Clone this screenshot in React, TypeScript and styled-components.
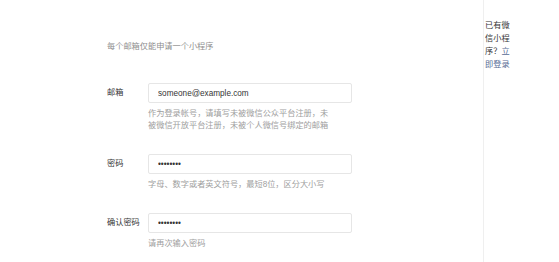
import React from "react";
import styled, { createGlobalStyle } from "styled-components";

const Global = createGlobalStyle`
  html, body { margin: 0; padding: 0; background: #ffffff; }
  body { font-family: "Liberation Sans", "Noto Sans CJK SC", sans-serif; }
`;

const Page = styled.div`
  display: flex;
  width: 559px;
  height: 262px;
  overflow: hidden;
  background: #fff;
`;

const Main = styled.div`
  flex: 1;
  padding: 41px 0 0 107px;
`;

const Notice = styled.div`
  font-size: 8.2px;
  line-height: 12px;
  color: #8f8f8f;
  margin-bottom: 30px;
`;

const Field = styled.div`
  display: grid;
  grid-template-columns: 41px 204px;
  margin-bottom: 22px;
`;

const Label = styled.label`
  font-size: 8.2px;
  line-height: 20px;
  color: #353535;
`;

const Input = styled.input`
  box-sizing: border-box;
  width: 204px;
  height: 20px;
  border: 1px solid #e6e6e6;
  border-radius: 2px;
  padding: 0 9px;
  font-family: "Liberation Sans", sans-serif;
  font-size: 8.2px;
  color: #353535;
  outline: none;
  background: #fff;
`;

const Hint = styled.div`
  grid-column: 2;
  width: 184px;
  margin-top: 5px;
  font-size: 8.2px;
  line-height: 12px;
  color: #9e9e9e;
`;

const Side = styled.aside`
  width: 76px;
  border-left: 1px solid #efefef;
  padding: 19px 0 0 1px;
  box-sizing: border-box;
`;

const SideText = styled.p`
  margin: 0;
  width: 26px;
  font-size: 8.2px;
  line-height: 13px;
  color: #353535;
`;

const Link = styled.a`
  color: #576b95;
  text-decoration: none;
`;

export default function App() {
  return (
    <>
      <Global />
      <Page>
        <Main>
          <Notice>每个邮箱仅能申请一个小程序</Notice>
          <Field>
            <Label>邮箱</Label>
            <Input type="text" defaultValue="someone@example.com" />
            <Hint>作为登录帐号，请填写未被微信公众平台注册，未被微信开放平台注册，未被个人微信号绑定的邮箱</Hint>
          </Field>
          <Field>
            <Label>密码</Label>
            <Input type="password" defaultValue="12345678" />
            <Hint>字母、数字或者英文符号，最短8位，区分大小写</Hint>
          </Field>
          <Field>
            <Label>确认密码</Label>
            <Input type="password" defaultValue="12345678" />
            <Hint>请再次输入密码</Hint>
          </Field>
        </Main>
        <Side>
          <SideText>
            已有微信小程序？<Link href="#">立即登录</Link>
          </SideText>
        </Side>
      </Page>
    </>
  );
}
